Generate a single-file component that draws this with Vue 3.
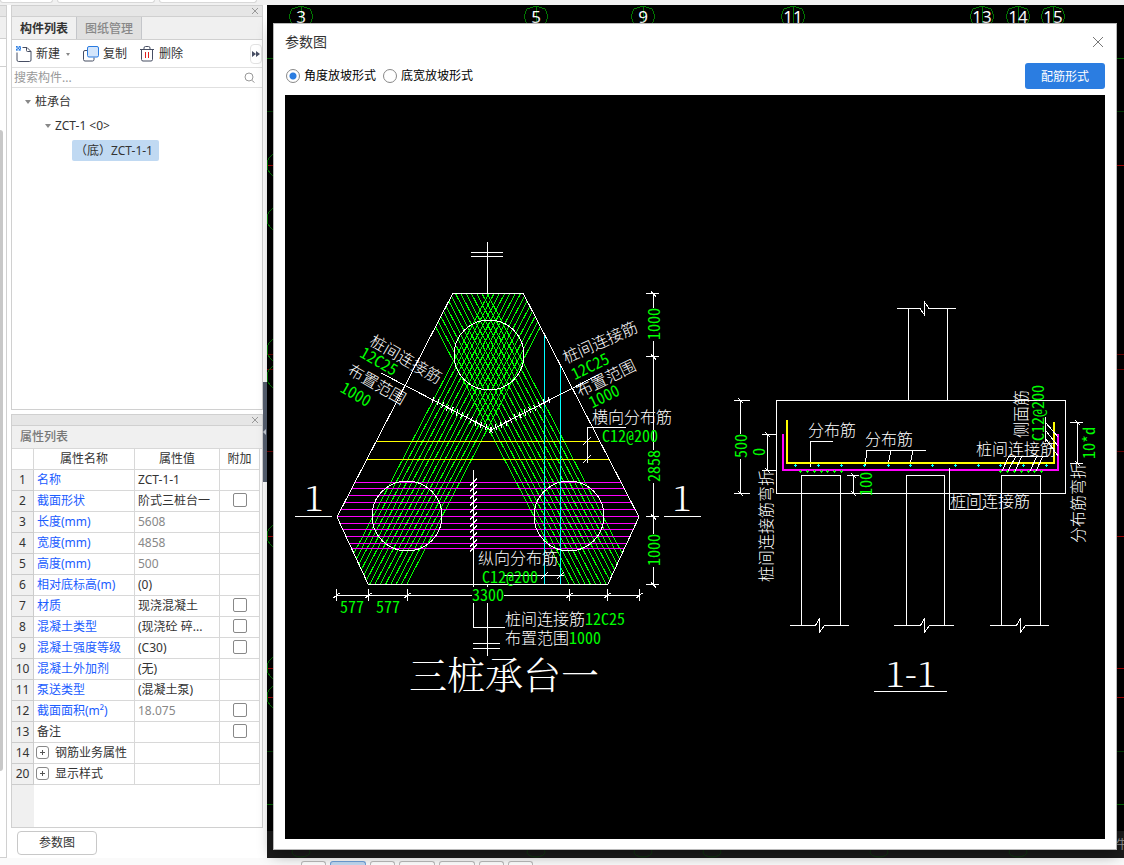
<script setup>
import { ref } from 'vue'

const slopeMode = ref('angle')
const search = ref('')

const rows = [
  { no: 1, name: '名称', value: 'ZCT-1-1', link: true },
  { no: 2, name: '截面形状', value: '阶式三桩台一', link: true, check: true },
  { no: 3, name: '长度(mm)', value: '5608', link: true, muted: true },
  { no: 4, name: '宽度(mm)', value: '4858', link: true, muted: true },
  { no: 5, name: '高度(mm)', value: '500', link: true, muted: true },
  { no: 6, name: '相对底标高(m)', value: '(0)', link: true },
  { no: 7, name: '材质', value: '现浇混凝土', link: true, check: true },
  { no: 8, name: '混凝土类型', value: '(现浇砼 碎...', link: true, check: true },
  { no: 9, name: '混凝土强度等级', value: '(C30)', link: true, check: true },
  { no: 10, name: '混凝土外加剂', value: '(无)', link: true },
  { no: 11, name: '泵送类型', value: '(混凝土泵)', link: true },
  { no: 12, name: '截面面积(m²)', value: '18.075', link: true, muted: true, check: true },
  { no: 13, name: '备注', value: '', check: true },
  { no: 14, name: '钢筋业务属性', value: '', group: true },
  { no: 20, name: '显示样式', value: '', group: true }
]

// Axis bubbles and grid lines of the model view behind the dialog
const axes = [
  { x: 34, n: '3' }, { x: 269, n: '5' }, { x: 376, n: '9' }, { x: 526, n: '11' },
  { x: 715, n: '13' }, { x: 751, n: '14' }, { x: 786, n: '15' }
]
const gridLines = [
  { y: 53, c: 'g' }, { y: 106, c: 'dg' }, { y: 160, c: 'r' }, { y: 349, c: 'dr' },
  { y: 364, c: 'dr' }, { y: 446, c: 'dr' }, { y: 531, c: 'r' }, { y: 663, c: 'r' },
  { y: 692, c: 'r' }, { y: 746, c: 'dg' }, { y: 799, c: 'g' }
]
const sideBubbles = [160, 214, 345, 372, 531, 663, 692]
const bottomBubbles = [34, 269, 376, 445, 612, 751]

// Plan view
const hexagon = '453,293 523,293 639,517 608,584 368,584 337,517'
const bars = Array.from({ length: 14 }, (_, i) => {
  const x = 338 + i * 5.3
  return { l1: x + 151, l2: x, r1: 976 - x - 151, r2: 976 - x }
})
const magentaY = [482, 488, 495, 502, 509, 516, 523, 529, 536, 543, 548].map(y => y + 0.5)
const rangeTicks = Array.from({ length: 13 }, (_, i) => {
  const t = i * 4.8
  return { l: 433 + t, r: 549 - t, y: 400 + t * 0.52 }
})
const bottomDims = [336, 368, 407, 569, 607, 639].map(x => x + 0.5)
const rightDims = [293, 356, 516, 584].map(y => y + 0.5)

// Section view
const piles = [
  { a: 801.5, b: 840.5, s: 790, m: 819.5, e: 849 },
  { a: 906.5, b: 944.5, s: 894, m: 924.5, e: 954 },
  { a: 1001.5, b: 1040.5, s: 990, m: 1020.5, e: 1049 }
]
const cyanX = [795, 818, 841, 864, 888, 910, 932, 955, 978, 1000, 1023, 1046]
const greenX = [800, 807, 814, 821, 827, 834, 841, 1000, 1007, 1014, 1021, 1028, 1034, 1041]

const labels = [
  { x: 406, y: 359, r: 30, t: '桩间连接筋' },
  { x: 379, y: 361, r: 30, t: '12C25', g: 1 },
  { x: 377, y: 384, r: 30, t: '布置范围' },
  { x: 356, y: 394, r: 30, t: '1000', g: 1 },
  { x: 600, y: 342, r: -24, t: '桩间连接筋' },
  { x: 590, y: 366, r: -26, t: '12C25', g: 1 },
  { x: 606, y: 378, r: -26, t: '布置范围' },
  { x: 604, y: 396, r: -26, t: '1000', g: 1 },
  { x: 632, y: 417, r: 0, t: '横向分布筋' },
  { x: 630, y: 436, r: 0, t: 'C12@200', g: 1 },
  { x: 518, y: 558, r: 0, t: '纵向分布筋' },
  { x: 510, y: 577, r: 0, t: 'C12@200', g: 1 },
  { x: 545, y: 619, r: 0, t: '桩间连接筋' },
  { x: 605, y: 619, r: 0, t: '12C25', g: 1 },
  { x: 537, y: 638, r: 0, t: '布置范围' },
  { x: 585, y: 638, r: 0, t: '1000', g: 1 },
  { x: 488, y: 595, r: 0, t: '3300', g: 1 },
  { x: 352, y: 607, r: 0, t: '577', g: 1 },
  { x: 388, y: 607, r: 0, t: '577', g: 1 },
  { x: 654, y: 324, r: -90, t: '1000', g: 1 },
  { x: 654, y: 466, r: -90, t: '2858', g: 1 },
  { x: 654, y: 550, r: -90, t: '1000', g: 1 },
  { x: 741, y: 446, r: -90, t: '500', g: 1 },
  { x: 759, y: 452, r: -90, t: '0', g: 1 },
  { x: 766, y: 526, r: -90, t: '桩间连接筋弯折' },
  { x: 832, y: 430, r: 0, t: '分布筋' },
  { x: 889, y: 439, r: 0, t: '分布筋' },
  { x: 866, y: 484, r: -90, t: '100', g: 1 },
  { x: 990, y: 501, r: 0, t: '桩间连接筋' },
  { x: 1016, y: 449, r: 0, t: '桩间连接筋' },
  { x: 1021, y: 414, r: -90, t: '侧面筋' },
  { x: 1038, y: 413, r: -90, t: 'C12@200', g: 1 },
  { x: 1078, y: 503, r: -90, t: '分布筋弯折' },
  { x: 1089, y: 443, r: -90, t: '10*d', g: 1 }
]
</script>

<template>
  <div class="app">
    <div class="ribbon"><i></i><i></i><i></i></div>

    <div class="body">
      <aside class="sliver">
        <div class="sliver-head"></div>
        <div class="sliver-tab"></div>
        <div class="sliver-tool"></div>
        <div class="sliver-scroll"></div>
      </aside>

      <div class="side">
        <section class="panel components">
          <div class="grip">
            <button class="close" aria-label="关闭构件列表">
              <svg width="8" height="8" viewBox="0 0 8 8"><path d="M1 1l6 6M7 1L1 7" /></svg>
            </button>
          </div>
          <div class="tabs">
            <button class="tab active">构件列表</button>
            <button class="tab">图纸管理</button>
          </div>
          <div class="toolbar">
            <button class="tool">
              <svg width="16" height="16" viewBox="0 0 16 16" fill="none">
                <path d="M6.500 1.500h4.500l4 4v8.500q0 1.500-1.500 1.500h-11q-1.500 0-1.500-1.500v-7.500" stroke="#474e63" />
                <path d="M10.500 1.500v3q0 1 1 1h3.500" stroke="#474e63" />
                <path d="M0 0h5v5H0z" fill="#bcd8f8" />
                <path d="M0 0h1.500v1.500H0zM3 0h1.500v1.500H3zM1.500 1.500H3V3H1.500zM4 1.500h1V3H4zM0 3h1.500v1.500H0zM3 3h1.500v1.500H3z" fill="#2a7be0" />
              </svg>
              <span>新建</span>
              <i class="caret"></i>
            </button>
            <button class="tool">
              <svg width="16" height="16" viewBox="0 0 16 16" fill="none">
                <path d="M4 4.500H2Q.5 4.500.5 6v7.500Q.5 15 2 15h7.500q1.500 0 1.500-1.500V11.500" stroke="#474e63" />
                <rect x="4.500" y=".5" width="11" height="10.500" rx="1.500" fill="#d3e5fb" stroke="#2a7be0" />
              </svg>
              <span>复制</span>
            </button>
            <button class="tool">
              <svg width="14" height="16" viewBox="0 0 14 16" fill="none">
                <path d="M0 3.500h14M4 3.500v-1.500Q4 .5 5.500 .5h3Q10 .5 10 2v1.500M1.500 3.500v10q0 1.500 1.500 1.500h8q1.500 0 1.500-1.500v-10" stroke="#474e63" />
                <path d="M5.500 6v6M8.500 6v6" stroke="#e02020" />
              </svg>
              <span>删除</span>
            </button>
            <button class="more" aria-label="更多">
              <svg width="8" height="6" viewBox="0 0 8 6"><path d="M0 0l4 3-4 3zM4 0l4 3-4 3z" fill="#474e63" /></svg>
            </button>
          </div>
          <div class="search">
            <input v-model="search" type="text" placeholder="搜索构件..." aria-label="搜索构件" />
            <svg width="12" height="12" viewBox="0 0 12 12" fill="none" stroke="#999">
              <circle cx="5" cy="5" r="4" /><path d="M8 8.500l2.500 2" />
            </svg>
          </div>
          <ul class="tree">
            <li class="l1"><i class="caret"></i>桩承台</li>
            <li class="l2"><i class="caret"></i>ZCT-1 &lt;0&gt;</li>
            <li class="l3"><span class="picked">（底）ZCT-1-1</span></li>
          </ul>
        </section>

        <section class="panel props">
          <div class="grip">
            <button class="close" aria-label="关闭属性列表">
              <svg width="8" height="8" viewBox="0 0 8 8"><path d="M1 1l6 6M7 1L1 7" /></svg>
            </button>
          </div>
          <h2>属性列表</h2>
          <div class="sheet">
            <table>
              <colgroup><col class="c0" /><col class="c1" /><col class="c2" /><col class="c3" /></colgroup>
              <thead>
                <tr><th></th><th>属性名称</th><th>属性值</th><th>附加</th></tr>
              </thead>
              <tbody>
                <tr v-for="r in rows" :key="r.no">
                  <td class="no">{{ r.no }}</td>
                  <td :class="{ link: r.link }">
                    <button v-if="r.group" class="plus" :aria-label="'展开' + r.name">
                      <svg width="7" height="7" viewBox="0 0 7 7"><path d="M1 3.500h5M3.500 1v5" stroke="#555" /></svg>
                    </button>{{ r.name }}
                  </td>
                  <td :class="{ muted: r.muted }">{{ r.value }}</td>
                  <td class="chk"><input v-if="r.check" type="checkbox" :aria-label="r.name + '附加'" /></td>
                </tr>
              </tbody>
            </table>
            <div class="rest"></div>
          </div>
        </section>
        <div class="foot"><button class="param">参数图</button></div>
      </div>

      <div class="splitter">
        <button aria-label="折叠面板"><svg width="4" height="6" viewBox="0 0 4 6"><path d="M3 0v6L0 3z" fill="#c8ced6" /></svg></button>
      </div>

      <main class="view">
        <svg class="model" width="100%" height="100%">
          <g v-for="l in gridLines" :key="'l' + l.y">
            <line x1="0" x2="100%" :y1="l.y + 0.5" :y2="l.y + 0.5" :class="l.c" />
          </g>
          <circle v-for="y in sideBubbles" :key="'s' + y" cx="12" :cy="y" r="12" class="bubble" />
          <g v-for="a in axes" :key="a.n">
            <polygon :points="`${a.x - 12},11 ${a.x - 9},4 ${a.x},1 ${a.x + 9},4 ${a.x + 12},11 ${a.x + 9},20 ${a.x},23 ${a.x - 9},20`" class="bubble" />
            <line :x1="a.x" :x2="a.x" y1="1" y2="23" class="bubble" />
            <text :x="a.x" y="18" class="axis">{{ a.n }}</text>
          </g>
        </svg>
        <div class="status">
          <svg width="100%" height="100%">
            <ellipse v-for="x in bottomBubbles" :key="x" :cx="x" cy="21" rx="9" ry="5" class="dim" />
          </svg>
          <span>牛</span>
        </div>

        <section class="dialog" role="dialog" aria-labelledby="dlg-title">
          <header>
            <h1 id="dlg-title">参数图</h1>
            <button class="x" aria-label="关闭">
              <svg width="12" height="12" viewBox="0 0 12 12"><path d="M1 1l10 10M11 1L1 11" stroke="#777" fill="none" /></svg>
            </button>
          </header>
          <div class="options">
            <label><input v-model="slopeMode" type="radio" name="slope" value="angle" />角度放坡形式</label>
            <label><input v-model="slopeMode" type="radio" name="slope" value="width" />底宽放坡形式</label>
            <button class="primary">配筋形式</button>
          </div>

          <svg class="drawing" viewBox="285 95 820 744" role="img" aria-label="三桩承台一">
            <defs>
              <clipPath id="cap"><polygon :points="hexagon" /></clipPath>
            </defs>

            <g clip-path="url(#cap)" class="ln">
              <g class="green">
                <template v-for="(b, i) in bars" :key="i">
                  <line :x1="b.l1" y1="293" :x2="b.l2" y2="584" />
                  <line :x1="b.r1" y1="293" :x2="b.r2" y2="584" />
                </template>
              </g>
              <line v-for="y in magentaY" :key="y" x1="330" x2="645" :y1="y" :y2="y" class="magenta" />
              <path d="M330 441.500H645M330 459.500H645" class="yellow" />
              <path d="M544.500 300V584M560.500 300V584" class="cyan" />
            </g>

            <g class="ln white">
              <polygon :points="hexagon" />
              <circle cx="489" cy="355" r="35" />
              <circle cx="407" cy="516" r="35" />
              <circle cx="569" cy="516" r="35" />
              <path d="M487.500 242V293M471 252.500H503M471 256.500H503" />
              <path d="M487.500 584V587M487.500 603V656M473 643.500H500M473 648.500H500" />
              <path d="M473.500 470V587M473.500 603V627.500H505" />
              <path v-for="y in magentaY" :key="'t' + y" :d="`M470 ${y + 3}L477 ${y - 4}`" />
              <path d="M381 373L491 430L598 375" />
              <template v-for="(t, i) in rangeTicks" :key="'r' + i">
                <path :d="`M${t.l - 1} ${t.y + 3}L${t.l + 1} ${t.y - 3}M${t.r - 1} ${t.y - 3}L${t.r + 1} ${t.y + 3}`" />
              </template>
              <path d="M626 427.500H587.500V463M583 445L591 437M583 463L591 455" />
              <path d="M504 575.500H564M541 579L548 572M557 579L564 572" />
              <path d="M337 595.500H472M504 595.500H640" />
              <path v-for="x in bottomDims" :key="'b' + x" :d="`M${x} 589V601M${x - 3} 598L${x + 3} 593`" />
              <path d="M653.500 293V308M653.500 341V450M653.500 483V534M653.500 567V584" />
              <path v-for="y in rightDims" :key="'d' + y" :d="`M646 ${y}H659M651 ${y - 2}L656 ${y + 3}`" />
              <path d="M295 516.500H332M664 516.500H701" />
            </g>

            <g class="ln white">
              <path d="M897 308.500H920L924.500 315V302L929 308.500H956M908.500 308V400M947.500 308V400" />
              <rect x="776.500" y="400.500" width="289" height="93" />
              <path d="M740.500 400V434M740.500 459V493M734 400.500H750M734 493.500H750M738 398L743 403M738 491L743 496" />
              <path d="M767.500 434V470M762 434.500H776M762 470.500H776M765 432L770 437M765 468L770 473" />
              <path v-for="p in piles" :key="p.a" :d="`M${p.a} 625V475.500H${p.b}V625M${p.s} 625.500H${p.m - 4}L${p.m} 618V632L${p.m + 5} 625.500H${p.e}`" />
              <path d="M833 441.500H810.500V467M926 450.500H867L865 465M891 450L888 465M913 450L910 465" />
              <path d="M853.500 475V493M847 475.500H859M851 473L856 478M851 491L856 496" />
              <path d="M1077.500 422V464M1070 422.500H1083M1070 463.500H1083M1075 420L1080 425M1075 461L1080 466" />
              <path d="M874 691.500H947" />
            </g>
            <path d="M787 420V463H1054V422" class="ln yellow thick" />
            <path d="M783 434V470H1058V434" class="ln magenta thick" />
            <g class="ln white">
              <path d="M949.500 468V509.500H983" />
              <path d="M1009 456.500H1048M1009 456L1002 471M1016 456L1008 471M1022 456L1015 471M1037 456L1030 471M1043 456L1036 471" />
              <path d="M1045.500 417V442M1046 423L1058 437M1046 431L1058 446M1046 439L1058 456" />
            </g>
            <g class="ln cyan">
              <path v-for="x in cyanX" :key="x" :d="`M${x - 1} 465.500h3M${x + 0.5} 464v3`" />
            </g>
            <g class="ln green">
              <path v-for="x in greenX" :key="x" :d="`M${x - 1} 471.500h3M${x + 0.5} 470v3`" />
            </g>

            <text
              v-for="(l, i) in labels" :key="i" y="6" :class="l.g ? 'num' : 'cjk'"
              :transform="`translate(${l.x} ${l.y}) rotate(${l.r})`"
            >{{ l.t }}</text>
            <text x="314" y="511" class="mark">1</text>
            <text x="682" y="511" class="mark">1</text>
            <text x="911" y="687" class="mark">1-1</text>
            <text x="504" y="689" class="caption">三桩承台一</text>
          </svg>
        </section>
      </main>
    </div>

    <div class="dock"><i class="w1"></i><i class="w2 on"></i><i class="w1"></i><i class="w2"></i><i class="w2"></i><i class="w1"></i><i class="w1"></i></div>
  </div>
</template>

<style>
body { margin: 0; }
</style>

<style scoped>
.app {
  display: flex;
  flex-direction: column;
  height: 100vh;
  overflow: hidden;
  background: #fff;
  color: #333;
  font: 12px/20px "Noto Sans", "Noto Sans CJK SC", sans-serif;
}
.app *, .app *::before { box-sizing: border-box; }
button { font: inherit; color: inherit; border: 0; background: none; padding: 0; }
svg { display: block; }

.ribbon { flex: none; display: flex; gap: 4px; height: 5px; background: #f1f1f1; }
.ribbon i { width: 98px; height: 3px; background: #fff; border: 1px solid #d8d8d8; border-top: 0; border-radius: 0 0 3px 3px; }
.ribbon i:first-child { width: 53px; }

.body { flex: 1; display: flex; min-height: 0; }
.sliver { width: 7px; margin-right: 4px; border: 1px solid #d0d0d0; border-left: 0; }
.sliver-head { height: 11px; background: #e6e6e6; border-bottom: 1px solid #d0d0d0; }
.sliver-tab { height: 22px; background: #f0f0f0; border-bottom: 1px solid #d0d0d0; }
.sliver-tool { height: 28px; border-bottom: 1px solid #d0d0d0; }
.sliver-scroll { width: 3px; height: calc(100% - 210px); margin-top: 63px; background: #c8c8c8; border-radius: 0 3px 3px 0; }

.side { width: 252px; display: flex; flex-direction: column; }
.panel { border: 1px solid #d0d0d0; display: flex; flex-direction: column; background: #fff; }
.components { flex: 405 1 0; }
.props { flex: 414 1 0; margin-top: 4px; }
.grip { flex: none; height: 11px; display: flex; justify-content: flex-end; align-items: center; padding-right: 3px; background: #e6e6e6; border-bottom: 1px solid #d0d0d0; }
.close path { stroke: #999; fill: none; }

.tabs { flex: none; display: flex; height: 23px; background: #f0f0f0; border-bottom: 1px solid #d0d0d0; }
.tab { width: 65px; padding-top: 2px; color: #888; background: #e0e0e0; border-right: 1px solid #c4c6ca; font-weight: 500; }
.tab.active { color: #333; background: #f0f0f0; font-weight: 700; }

.toolbar { flex: none; display: flex; align-items: center; gap: 13px; height: 28px; padding: 1px 0 0 4px; border-bottom: 1px solid #e0e0e0; }
.tool { display: flex; align-items: center; gap: 4px; }
.tool:nth-child(3) { gap: 5px; }
.caret { border: 3px solid transparent; border-top: 4px solid #888; border-bottom: 0; }
.tool .caret { border-width: 3px 2px 0; margin-left: 2px; }
.more { margin-left: auto; width: 12px; height: 20px; border: 1px solid #e2e2e2; border-radius: 4px; display: flex; align-items: center; justify-content: center; }
.search { flex: none; display: flex; align-items: center; height: 20px; padding: 0 6px 0 2px; border-bottom: 1px solid #e0e0e0; }
.search input { flex: 1; min-width: 0; border: 0; outline: 0; padding: 0; font: inherit; background: none; }
.search input::placeholder { color: #999; opacity: 1; }

.tree { list-style: none; margin: 0; padding: 2px 0 0; line-height: 24px; }
.tree li { display: flex; align-items: center; height: 24px; }
.tree .caret { margin-right: 4px; }
.l1 { padding-left: 13px; }
.l2 { padding-left: 33px; }
.l3 { padding-left: 60px; }
.picked { line-height: 21px; padding: 0 6px 0 3px; background: #c0d9f2; border-radius: 2px; }

h2 { flex: none; margin: 0; height: 22px; padding-left: 8px; font-size: 12px; line-height: 22px; font-weight: 500; color: #777; background: #f0f0f0; }
.sheet { flex: 1; display: flex; flex-direction: column; min-height: 0; padding-right: 2px; overflow: hidden; border-top: 1px solid #d8d8d8; }
table { width: 100%; table-layout: fixed; border-collapse: separate; border-spacing: 0; }
.c0 { width: 22px; }
.c1 { width: 101px; }
.c2 { width: 85px; }
th, td { height: 21px; padding: 0 0 0 3px; line-height: 20px; border: 0 solid #d8d8d8; border-width: 0 1px 1px 0; font-weight: 400; text-align: left; white-space: nowrap; overflow: hidden; }
th { text-align: center; padding: 0; }
.no { background: #f0f0f0; text-align: center; padding: 0; border-color: #ccc; }
.link { color: #1a5cff; }
.muted { color: #888; }
.chk { padding: 0 0 2px; text-align: center; }
.chk input { appearance: none; display: block; width: 14px; height: 14px; margin: 0 auto; border: 1px solid #888; border-radius: 2px; background: #fff; }
.chk input:checked { background: #2b7de1; }
.plus { display: inline-flex; align-items: center; justify-content: center; width: 13px; height: 13px; margin: 0 6px 0 -1px; border: 1px solid #888; border-radius: 3px; vertical-align: 1px; }
.rest { flex: 1; width: 22px; background: #f0f0f0; }
.foot { flex: none; height: 30px; padding: 3px 6px; }
.param { width: 80px; height: 24px; border: 1px solid #c8c8c8; border-radius: 4px; background: #fff; }

.splitter { width: 4px; display: flex; flex-direction: column; padding-top: 377px; background: #fff; }
.splitter button { height: 100px; background: #566070; display: flex; align-items: center; }

.view { flex: 1; position: relative; min-width: 0; background: #000; }
.model { position: absolute; inset: 0; shape-rendering: crispEdges; }
.model line { fill: none; }
.g { stroke: #006c00; }
.dg { stroke: #003c00; }
.r { stroke: #b00000; }
.dr { stroke: #700000; }
.model .bubble { stroke: #007a00; fill: none; }
.axis { fill: #fff; font-size: 17px; text-anchor: middle; }
.status { position: absolute; left: 0; right: 0; bottom: 0; height: 27px; background: #1c1c1c; overflow: hidden; }
.status span { position: absolute; right: -4px; top: 4px; color: #999; }
.dim { fill: none; stroke: #123a12; }

.dialog {
  position: absolute;
  inset: 18px 7px 8px 6px;
  display: flex;
  flex-direction: column;
  padding: 0 11px 10px;
  background: #fff;
  border: 1px solid #b8b8b8;
  box-shadow: 0 4px 14px rgba(0, 0, 0, .45);
}
.dialog header { flex: none; height: 36px; margin-bottom: 3px; display: flex; align-items: center; justify-content: space-between; }
h1 { margin: 0; font-size: 14px; line-height: 20px; font-weight: 400; }
.x { padding-right: 1px; }
.options { flex: none; display: flex; align-items: center; gap: 6px; height: 26px; margin-bottom: 6px; color: #000; }
.options label { display: flex; align-items: center; gap: 4px; }
.options input { appearance: none; width: 14px; height: 14px; margin: 0; border: 1px solid #888; border-radius: 50%; background: #fff; }
.options input:first-child { margin-left: 1px; }
.options input:checked { background: radial-gradient(circle, #2b7de1 3px, #fff 4px); }
.primary { margin-left: auto; width: 80px; height: 26px; padding-top: 2px; color: #fff; background: #2b7de1; border-radius: 3px; }

.drawing { flex: 1; width: 100%; min-height: 0; background: #000; }
.ln { fill: none; stroke-width: 1; shape-rendering: crispEdges; }
.white { stroke: #fff; }
.green { stroke: #0f0; }
.magenta { stroke: #f0f; }
.yellow { stroke: #ff0; }
.cyan { stroke: #0ff; }
.thick { stroke-width: 2; }
.cjk, .num, .mark, .caption { text-anchor: middle; fill: #fff; }
.cjk { font: 300 16px "Noto Sans CJK SC", sans-serif; }
.num { font: 300 16px "Noto Sans Mono CJK SC", "Noto Sans CJK SC", monospace; fill: #0f0; }
.mark { font: 300 36px "Noto Serif CJK SC", "Liberation Serif", serif; }
.caption { font: 300 38px "Noto Serif CJK SC", "Noto Sans CJK SC", serif; }

.dock { flex: none; display: flex; gap: 4px; height: 7px; padding: 3px 0 0 301px; background: #fafafa; }
.dock i { border: 1px solid #bbb; border-bottom: 0; border-radius: 3px 3px 0 0; background: #fff; }
.w1 { width: 25px; }
.w2 { width: 36px; }
.dock .on { background: #c0d9f2; border-color: #6f9fd8; }
</style>
